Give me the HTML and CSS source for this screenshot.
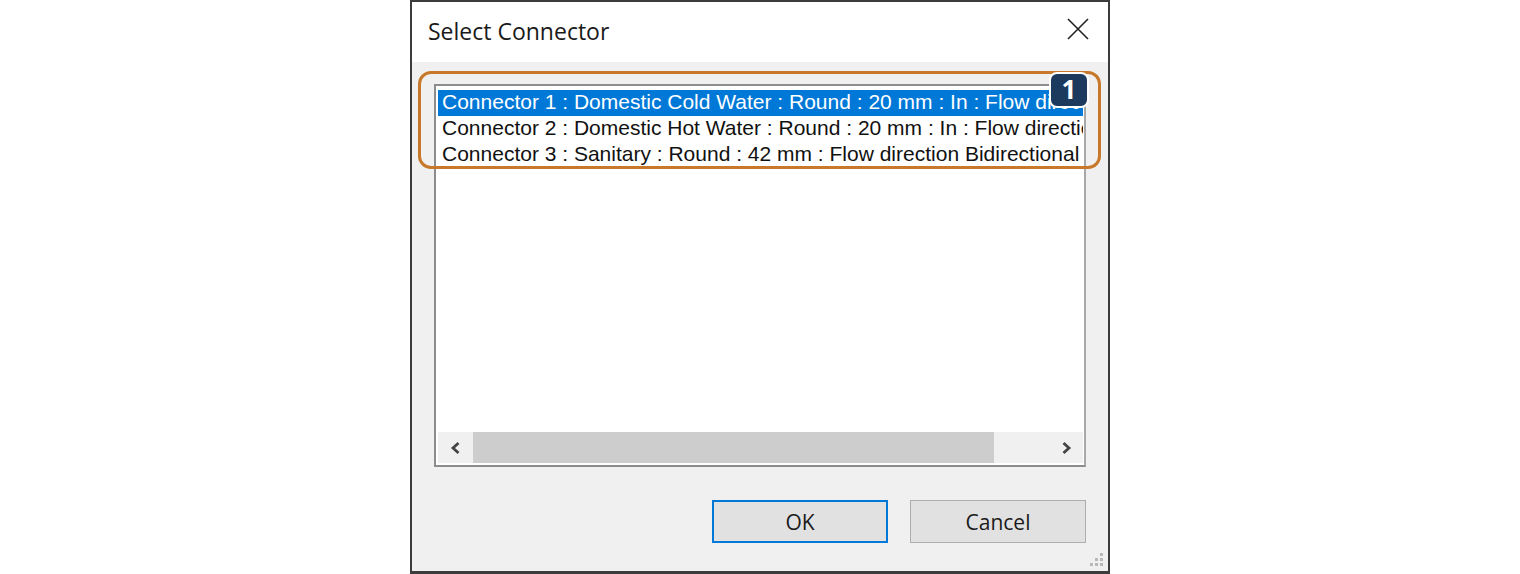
FILE: index.html
```html
<!DOCTYPE html>
<html lang="en">
<head>
<meta charset="utf-8">
<title>Select Connector</title>
<link rel="stylesheet" href="styles.css">
</head>
<body>
<div class="dialog">
  <div class="titlebar">
    <span class="title">Select Connector</span>
    <button class="close" aria-label="Close">
      <svg width="22" height="22" viewBox="0 0 22 22"><path d="M1 1 L21 21 M21 1 L1 21" stroke="#222" stroke-width="1.6" fill="none"/></svg>
    </button>
  </div>
  <div class="content">
    <div class="list-area">
      <div class="listbox">
        <div class="items">
          <div class="item selected">Connector 1 : Domestic Cold Water : Round : 20 mm : In : Flow direction Bidirectional</div>
          <div class="item">Connector 2 : Domestic Hot Water : Round : 20 mm : In : Flow direction Bidirectional</div>
          <div class="item">Connector 3 : Sanitary : Round : 42 mm : Flow direction Bidirectional</div>
        </div>
        <div class="hscroll">
          <div class="arrow">
            <svg width="14" height="14" viewBox="0 0 14 14"><path d="M9.5 2 L4 7 L9.5 12" stroke="#444" stroke-width="2.8" fill="none"/></svg>
          </div>
          <div class="track"><div class="thumb"></div></div>
          <div class="arrow">
            <svg width="14" height="14" viewBox="0 0 14 14"><path d="M4.5 2 L10 7 L4.5 12" stroke="#444" stroke-width="2.8" fill="none"/></svg>
          </div>
        </div>
      </div>
      <div class="callout"></div>
      <div class="badge">1</div>
    </div>
    <div class="buttons">
      <button class="btn default">OK</button>
      <button class="btn">Cancel</button>
    </div>
    <svg class="grip" width="14" height="14" viewBox="0 0 14 14">
      <g fill="#b9b9b9">
        <rect x="10" y="0" width="3" height="3"/>
        <rect x="5" y="5" width="3" height="3"/><rect x="10" y="5" width="3" height="3"/>
        <rect x="0" y="10" width="3" height="3"/><rect x="5" y="10" width="3" height="3"/><rect x="10" y="10" width="3" height="3"/>
      </g>
    </svg>
  </div>
</div>
</body>
</html>
```

FILE: styles.css
```css
html, body {
  margin: 0;
  padding: 0;
  background: #ffffff;
}

.dialog {
  width: 700px;
  height: 574px;
  margin: 0 auto;
  box-sizing: border-box;
  border: 2px solid #3c3c3c;
  border-bottom-width: 3px;
  display: flex;
  flex-direction: column;
  font-family: "Open Sans", "Noto Sans", sans-serif;
}

.titlebar {
  height: 60px;
  flex: none;
  background: #ffffff;
  display: flex;
  align-items: center;
  justify-content: space-between;
  padding-left: 16px;
}

.title {
  font-size: 23px;
  color: #1a1a1a;
  margin-top: -3px;
}

.close {
  width: 60px;
  height: 60px;
  border: none;
  background: transparent;
  padding: 0 0 6px 0;
  display: flex;
  align-items: center;
  justify-content: center;
}

.content {
  flex: 1;
  background: #f0f0f0;
  padding: 22px 22px 0 22px;
  position: relative;
  display: flex;
  flex-direction: column;
}

.list-area {
  position: relative;
}

.listbox {
  height: 383px;
  box-sizing: border-box;
  border: 2px solid #8c8c8c;
  border-right-color: #a8a8a8;
  border-bottom-color: #8c8c8c;
  background: #ffffff;
  padding: 4px 1px 2px 2px;
  display: flex;
  flex-direction: column;
}

.items {
  flex: 1;
  overflow: hidden;
  font-family: "Liberation Sans", Arial, sans-serif;
  font-size: 21px;
  letter-spacing: 0;
  color: #111;
}

.item {
  height: 26px;
  line-height: 24px;
  white-space: nowrap;
  padding-left: 4px;
}

.item.selected {
  background: #0078d7;
  color: #ffffff;
  width: 100%;
  box-sizing: border-box;
}

.hscroll {
  height: 31px;
  flex: none;
  display: flex;
  background: #f0f0f0;
}

.arrow {
  width: 35px;
  display: flex;
  align-items: center;
  justify-content: center;
}

.track {
  flex: 1;
  display: flex;
}

.thumb {
  width: 521px;
  background: #cdcdcd;
}

.callout {
  position: absolute;
  left: -16px;
  top: -13px;
  width: 683px;
  height: 98px;
  box-sizing: border-box;
  border: 3px solid #c8782a;
  border-radius: 13px;
}

.badge {
  position: absolute;
  left: 615px;
  top: -12px;
  width: 40px;
  height: 36px;
  box-sizing: border-box;
  background: #1b3a5e;
  border: 2px solid #ffffff;
  border-radius: 8px;
  color: #ffffff;
  font-family: "Open Sans", "Noto Sans", sans-serif;
  font-weight: 700;
  font-size: 26px;
  line-height: 31px;
  text-align: center;
}

.buttons {
  margin-top: 33px;
  display: flex;
  justify-content: flex-end;
  gap: 22px;
}

.btn {
  width: 176px;
  height: 43px;
  box-sizing: border-box;
  background: #e1e1e1;
  border: 1px solid #adadad;
  font-family: "Open Sans", "Noto Sans", sans-serif;
  font-size: 21px;
  color: #1a1a1a;
  padding: 0;
}

.btn.default {
  border: 2px solid #0078d7;
}

.grip {
  position: absolute;
  right: 4px;
  bottom: 4px;
}
```
